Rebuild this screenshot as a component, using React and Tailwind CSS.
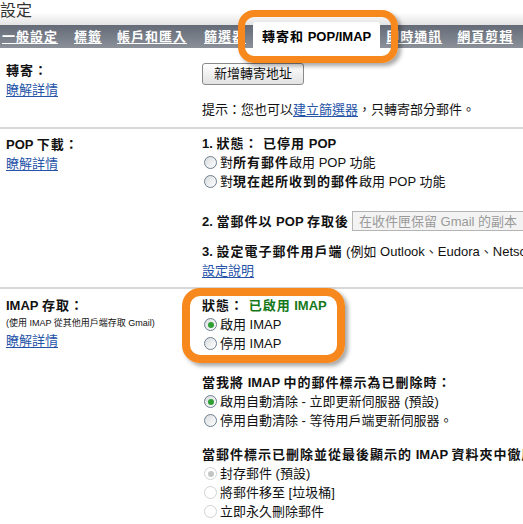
import React from 'react';

const Radio = ({ checked = false, disabled = false }) => (
  <span
    className={
      disabled
        ? 'ml-[2px] mr-[3px] flex h-[13px] w-[13px] shrink-0 items-center justify-center rounded-full border border-[#cfd3d6] bg-white'
        : 'ml-[2px] mr-[3px] flex h-[13px] w-[13px] shrink-0 items-center justify-center rounded-full border border-[#6f7f8f] bg-linear-to-br from-[#d8dcdf] to-white'
    }
  >
    {checked && (
      <span
        className={
          disabled
            ? 'h-[6px] w-[6px] rounded-full bg-[#c4c4c4]'
            : 'h-[6px] w-[6px] rounded-full bg-[#2f9e33]'
        }
      />
    )}
  </span>
);

const Option = ({ checked, disabled, children }) => (
  <div className="flex h-[19px] items-center">
    <Radio checked={checked} disabled={disabled} />
    <span className="leading-[19px]">{children}</span>
  </div>
);

const Learn = () => (
  <a className="text-[#2453a8] underline underline-offset-2">瞭解詳情</a>
);

// latin parts inside bold lines keep normal spacing
const L = ({ children }) => <span className="tracking-normal">{children}</span>;

const App = () => {
  return (
    <div className="relative h-[524px] w-[523px] overflow-hidden bg-white font-['Liberation_Sans','Noto_Sans_CJK_TC',sans-serif] text-[13px] text-[#111]">
      {/* header */}
      <div className="h-[25px] bg-linear-to-b from-white via-white to-[#e3e3e3] text-[16px] leading-[22px] text-[#333]">
        設定
      </div>

      {/* tabs */}
      <nav className="flex h-[23px] items-end whitespace-nowrap bg-linear-to-b from-[#646b76] to-[#8b9099] font-bold tracking-[1px] text-white">
        <span className="mb-[2px] ml-[2px] leading-[19px] underline underline-offset-2">一般設定</span>
        <span className="mb-[2px] ml-[16px] leading-[19px] underline underline-offset-2">標籤</span>
        <span className="mb-[2px] ml-[15px] leading-[19px] underline underline-offset-2">帳戶和匯入</span>
        <span className="mb-[2px] ml-[17px] leading-[19px] underline underline-offset-2">篩選器</span>
        <span className="ml-[7px] block h-[26px] rounded-t-[3px] bg-white px-[9px] pt-[5px] leading-[19px] text-black">
          轉寄和<L>&nbsp;POP/IMAP</L>
        </span>
        <span className="mb-[2px] ml-[6px] leading-[19px] underline underline-offset-2">即時通訊</span>
        <span className="mb-[2px] ml-[15px] leading-[19px] underline underline-offset-2">網頁剪輯</span>
      </nav>

      {/* forwarding */}
      <div className="flex">
        <div className="w-[202px] shrink-0 pl-[6px] pt-[13px] leading-[19px]">
          <div className="font-bold tracking-[1px]">轉寄：</div>
          <Learn />
        </div>
        <div className="min-w-0 flex-1 whitespace-nowrap pb-[8px] pt-[15px]">
          <button className="h-[22px] rounded-[3px] border border-[#8a8a8a] bg-linear-to-b from-white to-[#e2e2e2] px-[11px] leading-[20px] text-[#111]">
            新增轉寄地址
          </button>
          <div className="mt-[15px] leading-[19px]">
            提示：您也可以<a className="text-[#2453a8] underline underline-offset-2">建立篩選器</a>，只轉寄部分郵件。
          </div>
        </div>
      </div>
      <div className="h-[2px] bg-[#d8d8d8]" />

      {/* POP */}
      <div className="flex">
        <div className="w-[202px] shrink-0 pl-[6px] pt-[6px] leading-[19px]">
          <div className="font-bold tracking-[1px]">
            <L>POP </L>下載：
          </div>
          <Learn />
        </div>
        <div className="min-w-0 flex-1 whitespace-nowrap pb-[7px] pt-[5px] leading-[19px]">
          <div className="font-bold tracking-[1px]">
            <L>1. </L>狀態： 已停用<L> POP</L>
          </div>
          <Option>
            對<b className="tracking-[1px]">所有郵件</b>啟用 POP 功能
          </Option>
          <Option>
            對<b className="tracking-[1px]">現在起所收到的郵件</b>啟用 POP 功能
          </Option>
          <div className="mt-[20px] flex h-[20px] items-center">
            <span className="font-bold tracking-[1px]">
              <L>2. </L>當郵件以<L> POP </L>存取後
            </span>
            <span className="ml-[3px] flex h-[20px] w-[200px] shrink-0 items-center border border-[#b4b4b4] bg-[#f3f3f3] pl-[6px] text-[#9a9a9a]">
              在收件匣保留 Gmail 的副本
            </span>
          </div>
          <div className="mt-[11px]">
            <span className="font-bold tracking-[1px]">
              <L>3. </L>設定電子郵件用戶端
            </span>{' '}
            (例如 Outlook、Eudora、Netscape Mail)
          </div>
          <a className="text-[#2453a8] underline underline-offset-2">設定說明</a>
        </div>
      </div>
      <div className="h-[2px] bg-[#d8d8d8]" />

      {/* IMAP */}
      <div className="flex">
        <div className="w-[202px] shrink-0 pl-[6px] pt-[7px] leading-[19px]">
          <div className="font-bold tracking-[1px]">
            <L>IMAP </L>存取：
          </div>
          <div className="text-[9px] leading-[16px]">(使用 IMAP 從其他用戶端存取 Gmail)</div>
          <Learn />
        </div>
        <div className="min-w-0 flex-1 whitespace-nowrap pt-[7px] leading-[19px]">
          <div className="font-bold tracking-[1px]">
            狀態： <span className="text-[#17781a]">已啟用<L> IMAP</L></span>
          </div>
          <Option checked>啟用 IMAP</Option>
          <Option>停用 IMAP</Option>
          <div className="mt-[20px] font-bold tracking-[1px]">
            當我將<L> IMAP </L>中的郵件標示為已刪除時：
          </div>
          <Option checked>啟用自動清除 - 立即更新伺服器 (預設)</Option>
          <Option>停用自動清除 - 等待用戶端更新伺服器。</Option>
          <div className="mt-[15px] font-bold tracking-[1px]">
            當郵件標示已刪除並從最後顯示的<L> IMAP </L>資料夾中徹底刪除時：
          </div>
          <Option checked disabled>封存郵件 (預設)</Option>
          <Option disabled>將郵件移至 [垃圾桶]</Option>
          <Option disabled>立即永久刪除郵件</Option>
        </div>
      </div>

      {/* highlight rings */}
      <div className="absolute left-[238px] top-[10px] h-[53px] w-[160px] rounded-[16px] border-[7px] border-[#f6881d] shadow-[3px_3px_4px_rgba(0,0,0,0.35)]" />
      <div className="absolute left-[182px] top-[288px] h-[75px] w-[163px] rounded-[18px] border-[8px] border-[#f6881d] shadow-[3px_3px_4px_rgba(0,0,0,0.35)]" />
    </div>
  );
};

export default App;
